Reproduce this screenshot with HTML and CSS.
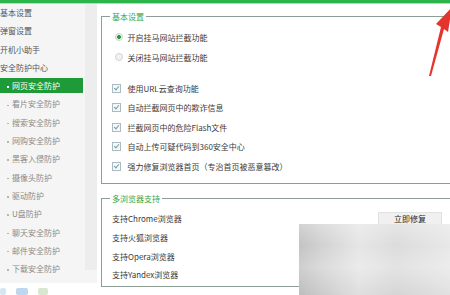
FILE: index.html
```html
<!DOCTYPE html>
<html lang="zh-CN">
<head>
  <meta charset="UTF-8">
  <title>安全防护中心</title>
  <link rel="stylesheet" href="styles.css">
</head>
<body>
  <div class="topbar"></div>

  <div class="layout">
    <!-- Left menu -->
    <aside class="sidebar">
      <ul class="nav">
        <li class="top">基本设置</li>
        <li class="top">弹窗设置</li>
        <li class="top">开机小助手</li>
        <li class="top">安全防护中心</li>
        <li class="sub active">网页安全防护</li>
        <li class="sub">看片安全防护</li>
        <li class="sub">搜索安全防护</li>
        <li class="sub">网购安全防护</li>
        <li class="sub">黑客入侵防护</li>
        <li class="sub">摄像头防护</li>
        <li class="sub">驱动防护</li>
        <li class="sub">U盘防护</li>
        <li class="sub">聊天安全防护</li>
        <li class="sub">邮件安全防护</li>
        <li class="sub">下载安全防护</li>
      </ul>
      <div class="scroll"></div>
    </aside>

    <!-- Settings panel -->
    <main class="content">
      <fieldset class="group basic">
        <legend>基本设置</legend>
        <div class="opts radios">
          <div class="opt"><span class="radio checked"></span>开启挂马网站拦截功能</div>
          <div class="opt"><span class="radio"></span>关闭挂马网站拦截功能</div>
        </div>
        <div class="opts checks">
          <div class="opt"><span class="check"></span>使用URL云查询功能</div>
          <div class="opt"><span class="check"></span>自动拦截网页中的欺诈信息</div>
          <div class="opt"><span class="check"></span>拦截网页中的危险Flash文件</div>
          <div class="opt"><span class="check"></span>自动上传可疑代码到360安全中心</div>
          <div class="opt"><span class="check"></span>强力修复浏览器首页（专治首页被恶意篡改）</div>
        </div>
      </fieldset>

      <fieldset class="group browsers">
        <legend>多浏览器支持</legend>
        <div class="opts list">
          <div class="opt first">支持Chrome浏览器<button class="fix">立即修复</button></div>
          <div class="opt">支持火狐浏览器</div>
          <div class="opt">支持Opera浏览器</div>
          <div class="opt">支持Yandex浏览器</div>
        </div>
      </fieldset>
    </main>
  </div>

  <div class="footer">
    <span class="ico a"></span>
    <span class="ico b"></span>
    <span class="ico c"></span>
  </div>

  <!-- blurred patch and red marker lying over the screenshot -->
  <div class="blur"></div>
  <svg class="arrow" width="30" height="80" viewBox="0 0 30 80">
    <polygon points="9,76 11,76 24,29 28,32 32,7 16,24 21,27" fill="#e5342c"/>
  </svg>
</body>
</html>
```

FILE: styles.css
```css
html, body {
  overflow: hidden;
}
body {
  margin: 0;
  width: 460px;
  height: 295px;
  position: relative;
  background: #fff;
  font-family: "Noto Sans CJK SC", "Noto Sans", sans-serif;
  font-size: 8px;
  color: #3a3a3a;
}
.topbar {
  height: 3px;
  background: #2db44a;
  border-bottom: 1px solid #a9e0b5;
}
.layout {
  display: flex;
  height: 279px;
}

/* Left menu */
.sidebar {
  display: flex;
  width: 97px;
  background: #f5f5f5;
}
.nav {
  list-style: none;
  margin: 0;
  padding: 1px 0 0;
  width: 85px;
}
.nav li {
  height: 15px;
  line-height: 15px;
  margin: 0 2px 3.3px 0;
  white-space: nowrap;
}
.nav .top {
  color: #555;
}
.nav .sub {
  color: #8a8a8a;
  padding-left: 7px;
}
.nav .sub::before {
  content: "";
  display: inline-block;
  width: 1.5px;
  height: 1.5px;
  margin-right: 3.5px;
  vertical-align: middle;
  background: #b5b5b5;
}
.nav .active {
  background: #1f9a38;
  color: #fff;
}
.nav .active::before {
  background: #fff;
}
.scroll {
  width: 12px;
  height: 266px;
  background: #ededed;
}

/* Settings panel */
.content {
  flex: 1;
  padding: 6.5px 0 0 4px;
}
.group {
  margin: 0;
  padding: 0 10px;
  border: 1px solid #8d9f95;
  min-width: 0;
}
.group legend {
  padding: 0 2px;
  margin-left: -2px;
  line-height: 11px;
  color: #3aa53c;
}
.basic {
  padding-bottom: 10px;
}
.browsers {
  margin-top: 9px;
  padding-bottom: 4px;
}
.opts {
  display: flex;
  flex-direction: column;
}
.opt {
  display: flex;
  align-items: center;
  height: 14px;
  white-space: nowrap;
}
.radios {
  margin-top: 8.5px;
  gap: 6px;
  padding-left: 3px;
}
.checks {
  margin-top: 17px;
  gap: 5.6px;
}
.list {
  margin-top: 7.5px;
  gap: 4.7px;
}
.radio {
  width: 6px;
  height: 6px;
  margin-right: 4.5px;
  border: 1px solid #d2d2d2;
  border-radius: 50%;
  background: #f3f3f3;
}
.radio.checked {
  background: radial-gradient(circle, #2a9b3a 0 1.6px, #d9eedc 2.2px, #f3f3f3 3px);
  border-color: #c7d6ca;
}
.check {
  position: relative;
  width: 7px;
  height: 7px;
  margin-right: 6.5px;
  border: 1px solid #a9bcc6;
  background: #f4f8fa;
}
.check::after {
  content: "";
  position: absolute;
  left: 2px;
  top: 0;
  width: 2px;
  height: 4px;
  border: solid #7f9f92;
  border-width: 0 1px 1px 0;
  transform: rotate(40deg);
}
.first {
  justify-content: space-between;
}
.fix {
  width: 64px;
  height: 14px;
  margin-right: 7px;
  padding: 0;
  border: 1px solid #e2e2e2;
  background: #f0f0f0;
  font-family: inherit;
  font-size: 8px;
  color: #222;
}

/* bottom strip */
.footer {
  display: flex;
  gap: 10px;
  padding: 5px 0 0 0;
}
.ico {
  height: 7px;
  border-radius: 2px;
}
.ico.a { width: 6px; background: #d4e6f5; }
.ico.b { width: 12px; background: #bcd7ef; }
.ico.c { width: 10px; background: #d8e8d0; }

/* overlays */
.blur {
  position: absolute;
  left: 299px;
  top: 224px;
  width: 151px;
  height: 71px;
  background:
    linear-gradient(180deg, rgba(255,255,255,0.25), rgba(255,255,255,0) 30%, rgba(255,255,255,0.2) 60%, rgba(0,0,0,0.03)),
    linear-gradient(90deg, #c3c3c3 0%, #d2d2d2 15%, #e6e6e6 40%, #dcdcdc 65%, #e8e8e8 100%);
}
.arrow {
  position: absolute;
  top: 0;
  left: 420px;
}
```
